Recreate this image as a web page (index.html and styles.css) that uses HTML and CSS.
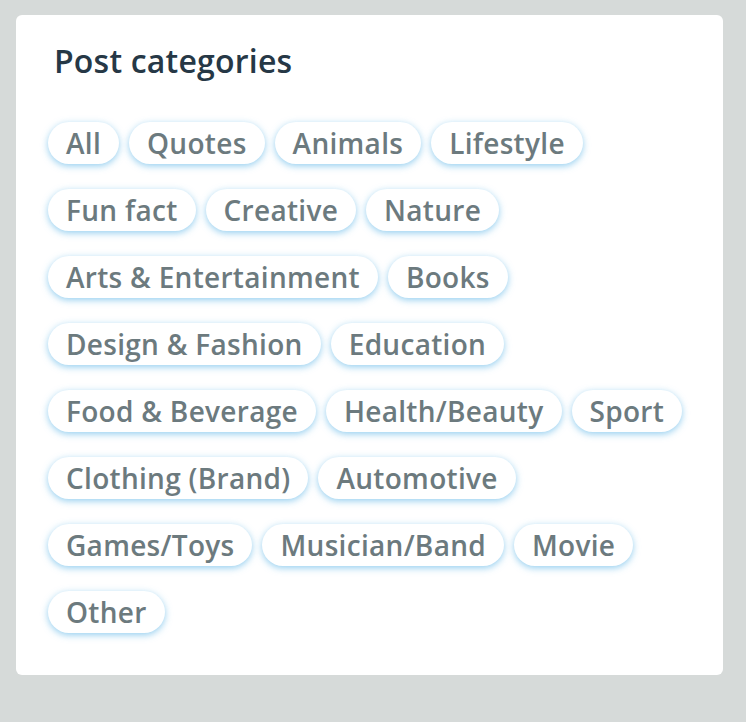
FILE: index.html
```html
<!DOCTYPE html>
<html>
<head>
<meta charset="utf-8">
<link rel="stylesheet" href="styles.css">
</head>
<body>
<div class="card">
  <h2 class="title">Post categories</h2>
  <div class="chips">
    <span class="chip">All</span>
    <span class="chip">Quotes</span>
    <span class="chip">Animals</span>
    <span class="chip">Lifestyle</span>
    <span class="chip">Fun fact</span>
    <span class="chip">Creative</span>
    <span class="chip">Nature</span>
    <span class="chip">Arts &amp; Entertainment</span>
    <span class="chip">Books</span>
    <span class="chip">Design &amp; Fashion</span>
    <span class="chip">Education</span>
    <span class="chip">Food &amp; Beverage</span>
    <span class="chip">Health/Beauty</span>
    <span class="chip">Sport</span>
    <span class="chip">Clothing (Brand)</span>
    <span class="chip">Automotive</span>
    <span class="chip">Games/Toys</span>
    <span class="chip">Musician/Band</span>
    <span class="chip">Movie</span>
    <span class="chip">Other</span>
  </div>
</div>
</body>
</html>
```
FILE: styles.css
```css
html, body {
  margin: 0;
  padding: 0;
}
body {
  background: #d6dad9;
  padding: 15px 23px 0 16px;
  font-family: "Open Sans", "Liberation Sans", sans-serif;
}
.card {
  background: #ffffff;
  border-radius: 6px;
  padding: 26px 32px 42px 32px;
  box-sizing: border-box;
  width: 707px;
}
.title {
  margin: 0 0 41px 6px;
  font-size: 32px;
  font-weight: 600;
  color: #263846;
  line-height: 40px;
  letter-spacing: 0.2px;
}
.chips {
  display: flex;
  flex-wrap: wrap;
  column-gap: 10px;
  row-gap: 25px;
}
.chip {
  display: inline-flex;
  align-items: center;
  height: 42px;
  padding: 0 18px;
  border-radius: 21px;
  background: #ffffff;
  box-shadow: 0 2px 7px rgba(90, 180, 230, 0.65);
  color: #6c7a7e;
  font-size: 28px;
  font-weight: 600;
  letter-spacing: 0.3px;
  white-space: nowrap;
}
```
